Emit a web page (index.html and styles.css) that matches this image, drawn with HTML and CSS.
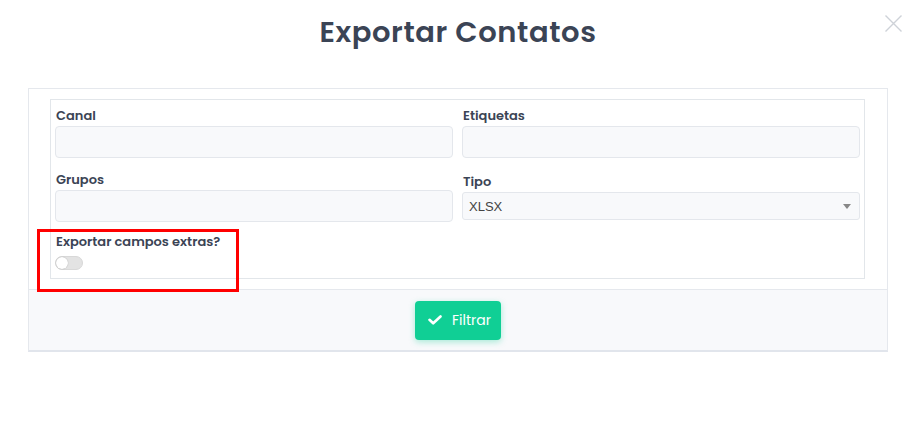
FILE: index.html
```html
<!DOCTYPE html>
<html lang="pt">
<head>
<meta charset="utf-8">
<title>Exportar Contatos</title>
<link rel="stylesheet" href="styles.css">
</head>
<body>
<div class="modal">
  <header class="modal-header">
    <h1 class="modal-title">Exportar Contatos</h1>
    <button class="close" aria-label="Fechar">
      <svg width="17" height="17" viewBox="0 0 17 17"><path d="M0.5 0.5L16.5 16.5M16.5 0.5L0.5 16.5" stroke="#ced2d8" stroke-width="1.4" fill="none"/></svg>
    </button>
  </header>
  <section class="card">
    <div class="card-body">
      <div class="form-box">
        <div class="grid">
          <div class="field">
            <label class="label">Canal</label>
            <div class="input"></div>
          </div>
          <div class="field">
            <label class="label">Etiquetas</label>
            <div class="input"></div>
          </div>
          <div class="field">
            <label class="label">Grupos</label>
            <div class="input"></div>
          </div>
          <div class="field field-shift">
            <label class="label">Tipo</label>
            <div class="select">
              <span class="select-value">XLSX</span>
              <span class="caret"></span>
            </div>
          </div>
        </div>
        <div class="toggle-field">
          <label class="label">Exportar campos extras?</label>
          <span class="switch"><span class="knob"></span></span>
          <span class="highlight"></span>
        </div>
      </div>
    </div>
    <footer class="card-footer">
      <button class="btn">
        <svg width="14" height="10" viewBox="0 0 14 10"><path d="M1.5 4.8L5.2 8.3L12.5 1.5" stroke="#fff" stroke-width="2.6" fill="none" stroke-linecap="round" stroke-linejoin="round"/></svg>
        <span>Filtrar</span>
      </button>
    </footer>
  </section>
</div>
</body>
</html>
```
FILE: styles.css
```css
* { box-sizing: border-box; }
html, body { margin: 0; padding: 0; background: #fff; }
body {
  font-family: "Poppins", "Open Sans", "Noto Sans", sans-serif;
  color: #3b4455;
  width: 916px;
  height: 425px;
  overflow: hidden;
}
.modal-header {
  position: relative;
  height: 88px;
  padding-top: 11px;
  text-align: center;
}
.modal-title {
  margin: 0;
  font-size: 29px;
  line-height: 42px;
  font-weight: 600;
  color: #3b4455;
  letter-spacing: 0.6px;
}
.close {
  position: absolute;
  right: 14px;
  top: 15px;
  border: 0;
  background: transparent;
  padding: 0;
  width: 17px;
  height: 17px;
  display: block;
}
.close svg { display: block; }
.card {
  margin: 0 28px;
  border: 1px solid #e5e8ed;
  border-bottom: 2px solid #e1e5ec;
}
.card-body { padding: 10px 22px 10px 21px; }
.form-box {
  border: 1px solid #e2e6ea;
  padding: 6px 4px 8px 4px;
}
.grid {
  display: grid;
  grid-template-columns: 1fr 1fr;
  column-gap: 9px;
  row-gap: 12px;
}
.field { display: flex; flex-direction: column; }
.field-shift { padding-top: 2px; }
.label {
  font-size: 13px;
  line-height: 20px;
  font-weight: 600;
  color: #3b4455;
  padding-left: 1px;
}
.input {
  height: 32px;
  background: #f8f9fb;
  border: 1px solid #e4e7ec;
  border-radius: 4px;
}
.select {
  height: 28px;
  background: #f8f9fb;
  border: 1px solid #e4e7ec;
  border-radius: 3px;
  display: flex;
  align-items: center;
  justify-content: space-between;
  padding: 0 8px 0 6px;
}
.select-value {
  font-family: "Liberation Sans", Arial, sans-serif;
  font-size: 13px;
  color: #444;
}
.caret {
  width: 0; height: 0;
  border-left: 4px solid transparent;
  border-right: 4px solid transparent;
  border-top: 5px solid #888;
}
.toggle-field {
  position: relative;
  margin-top: 10px;
  display: flex;
  flex-direction: column;
  align-items: flex-start;
}
.switch {
  margin-top: 4px;
  width: 28px;
  height: 14px;
  border-radius: 7px;
  background: #e3e3e3;
  border: 1px solid #d8d8d8;
  position: relative;
  display: block;
}
.knob {
  position: absolute;
  left: 0; top: 0;
  width: 12px; height: 12px;
  border-radius: 50%;
  background: #fff;
  box-shadow: 0 0 1px rgba(0,0,0,0.35);
}
.highlight {
  position: absolute;
  left: -18px;
  top: -3px;
  width: 202px;
  height: 63px;
  border: 3px solid #ff0000;
}
.card-footer {
  background: #f8f9fb;
  border-top: 1px solid #e5e8ed;
  height: 61px;
  display: flex;
  justify-content: center;
  align-items: center;
}
.btn {
  display: flex;
  align-items: center;
  gap: 10px;
  height: 39px;
  width: 86px;
  padding: 0 0 0 13px;
  border: 0;
  border-radius: 4px;
  background: #10cf95;
  color: #fff;
  font-family: inherit;
  font-size: 14px;
  font-weight: 400;
  box-shadow: 0 2px 6px rgba(16, 207, 149, 0.35);
}
```
